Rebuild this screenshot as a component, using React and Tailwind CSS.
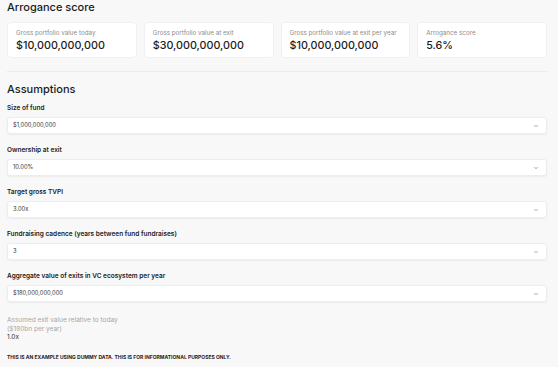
import React from 'react'

const SCORES = [
  { label: 'Gross portfolio value today', value: '$10,000,000,000' },
  { label: 'Gross portfolio value at exit', value: '$30,000,000,000' },
  { label: 'Gross portfolio value at exit per year', value: '$10,000,000,000' },
  { label: 'Arrogance score', value: '5.6%' },
]

const FIELDS = [
  { label: 'Size of fund', value: '$1,000,000,000' },
  { label: 'Ownership at exit', value: '10.00%' },
  { label: 'Target gross TVPI', value: '3.00x' },
  { label: 'Fundraising cadence (years between fund fundraises)', value: '3' },
  { label: 'Aggregate value of exits in VC ecosystem per year', value: '$180,000,000,000' },
]

function Chevron() {
  return (
    <svg width="6" height="6" viewBox="0 0 24 24" fill="none" stroke="#8a8a8a" strokeWidth="3" strokeLinecap="round" strokeLinejoin="round">
      <path d="M6 9l6 6 6-6" />
    </svg>
  )
}

export default function App() {
  return (
    <div className="w-[558px] h-[367px] overflow-hidden bg-[#f8f8f8] text-[#1b1b1b]" style={{ fontFamily: 'Inter, "Noto Sans", sans-serif' }}>
      <div className="ml-[7px] w-[540px]">
        {/* Score */}
        <h2 className="text-[11px] leading-[14px] font-medium">Arrogance score</h2>
        <div className="mt-[8px] grid grid-cols-4 gap-[7px]">
          {SCORES.map((s) => (
            <div key={s.label} className="h-[36px] rounded-[4px] bg-white border border-[#f0f0f0] pt-[6px] px-[8px]">
              <div className="text-[6.25px] leading-[9px] text-[#8c8c8c]">{s.label}</div>
              <div className="mt-[1px] text-[10.75px] leading-[13px] font-medium text-[#1b1b1b]">{s.value}</div>
            </div>
          ))}
        </div>

        <div className="mt-[13px] h-px bg-[#ebebeb]" />

        {/* Assumptions */}
        <h2 className="mt-[10px] text-[11px] leading-[14px] font-medium">Assumptions</h2>
        <div className="mt-[7px] flex flex-col gap-[11px]">
          {FIELDS.map((f) => (
            <div key={f.label}>
              <div className="text-[6.5px] leading-[10px] font-semibold text-[#222]">{f.label}</div>
              <div className="mt-[4px] h-[17px] rounded-[3px] bg-white border border-[#ededed] shadow-[0_1px_2px_rgba(0,0,0,0.05)] pl-[5px] pr-[7px] flex items-center justify-between">
                <span className="text-[5.75px] text-[#333]">{f.value}</span>
                <Chevron />
              </div>
            </div>
          ))}
        </div>

        <div className="mt-[14px] text-[6.5px] leading-[8.5px]">
          <div className="text-[#a6a6a6]">Assumed exit value relative to today</div>
          <div className="text-[#a6a6a6]">($180bn per year)</div>
          <div className="text-[#333]">1.0x</div>
        </div>

        <div className="mt-[12px] text-[5px] leading-[7px] font-bold uppercase text-[#222]">
          This is an example using dummy data. This is for informational purposes only.
        </div>
      </div>
    </div>
  )
}
